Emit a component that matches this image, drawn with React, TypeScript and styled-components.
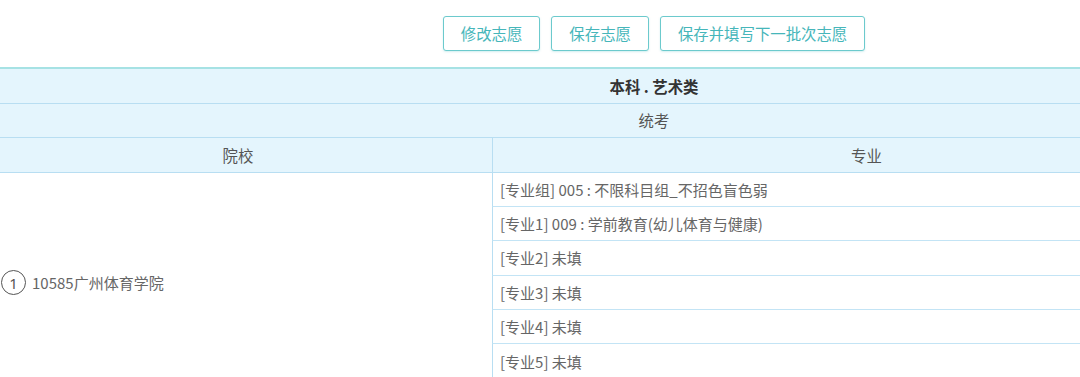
import React from "react";
import styled, { createGlobalStyle } from "styled-components";

const GlobalStyle = createGlobalStyle`
  html, body {
    margin: 0;
    padding: 0;
    background: #ffffff;
    overflow: hidden;
  }
  body {
    font-family: "Noto Sans CJK SC", "Microsoft YaHei", "Noto Sans", sans-serif;
    color: #666666;
  }
`;

const Viewport = styled.div`
  width: 100%;
  overflow: hidden;
`;

const Page = styled.div`
  width: 1340px;
  margin-left: -16px;
`;

const Toolbar = styled.div`
  display: flex;
  justify-content: center;
  gap: 11px;
  padding: 16px 0 16px;
`;

const Button = styled.button`
  height: 35px;
  padding: 0 17px;
  border: 1px solid #6ccacd;
  border-radius: 3px;
  background: #ffffff;
  color: #46b6ba;
  font-family: inherit;
  font-size: 15.4px;
  line-height: 33px;
  box-shadow: 0 1px 2px rgba(80, 190, 195, 0.25);
  cursor: pointer;
`;

const Table = styled.div`
  border-top: 2px solid #a6e2e4;
`;

const HeaderRow = styled.div<{ $bold?: boolean }>`
  height: 34.5px;
  box-sizing: border-box;
  display: flex;
  align-items: center;
  justify-content: center;
  background: #e4f5fd;
  border-bottom: 1px solid #b8def2;
  font-size: 15.4px;
  color: ${(p) => (p.$bold ? "#333333" : "#555555")};
  font-weight: ${(p) => (p.$bold ? 700 : 400)};
`;

const ColumnGrid = styled.div`
  display: grid;
  grid-template-columns: 508px 748px 84px;
`;

const ColHead = styled.div<{ $divider?: boolean }>`
  height: 34.5px;
  box-sizing: border-box;
  display: flex;
  align-items: center;
  justify-content: center;
  background: #e4f5fd;
  border-bottom: 1px solid #b8def2;
  border-left: ${(p) => (p.$divider ? "1px solid #b8def2" : "none")};
  font-size: 15.4px;
  color: #555555;
`;

const Body = styled.div`
  display: grid;
  grid-template-columns: 508px 748px 84px;
  grid-template-rows: repeat(6, 34.4px);
`;

const SchoolCell = styled.div`
  grid-column: 1;
  grid-row: 1 / span 6;
  display: flex;
  align-items: center;
  gap: 6px;
  padding-left: 17px;
  padding-top: 14px;
  font-size: 15px;
  color: #666666;
`;

const Circle = styled.span`
  flex: 0 0 auto;
  width: 25px;
  height: 25px;
  box-sizing: border-box;
  border: 1px solid #555555;
  border-radius: 50%;
  display: inline-flex;
  align-items: center;
  justify-content: center;
  font-size: 15px;
  color: #555555;
  font-family: "Noto Sans", sans-serif;
`;

const MajorCell = styled.div`
  grid-column: 2;
  box-sizing: border-box;
  display: flex;
  align-items: center;
  padding-left: 7px;
  border-left: 1px solid #b8def2;
  border-bottom: 1px solid #c3e4f5;
  font-size: 15px;
  color: #666666;
  white-space: nowrap;
`;

const SideCell = styled.div`
  grid-column: 3;
  box-sizing: border-box;
  border-left: 1px solid #b8def2;
  border-bottom: 1px solid #c3e4f5;
`;

const majors = [
  "[专业组] 005 : 不限科目组_不招色盲色弱",
  "[专业1] 009 : 学前教育(幼儿体育与健康)",
  "[专业2] 未填",
  "[专业3] 未填",
  "[专业4] 未填",
  "[专业5] 未填",
];

export default function App() {
  return (
    <>
      <GlobalStyle />
      <Viewport>
        <Page>
          <Toolbar>
            <Button>修改志愿</Button>
            <Button>保存志愿</Button>
            <Button>保存并填写下一批次志愿</Button>
          </Toolbar>
          <Table>
            <HeaderRow $bold>本科 . 艺术类</HeaderRow>
            <HeaderRow>统考</HeaderRow>
            <ColumnGrid>
              <ColHead>院校</ColHead>
              <ColHead $divider>专业</ColHead>
              <ColHead $divider />
            </ColumnGrid>
            <Body>
              <SchoolCell>
                <Circle>1</Circle>
                <span>10585广州体育学院</span>
              </SchoolCell>
              {majors.map((m, i) => (
                <React.Fragment key={i}>
                  <MajorCell style={{ gridRow: i + 1 }}>{m}</MajorCell>
                  <SideCell style={{ gridRow: i + 1 }} />
                </React.Fragment>
              ))}
            </Body>
          </Table>
        </Page>
      </Viewport>
    </>
  );
}
